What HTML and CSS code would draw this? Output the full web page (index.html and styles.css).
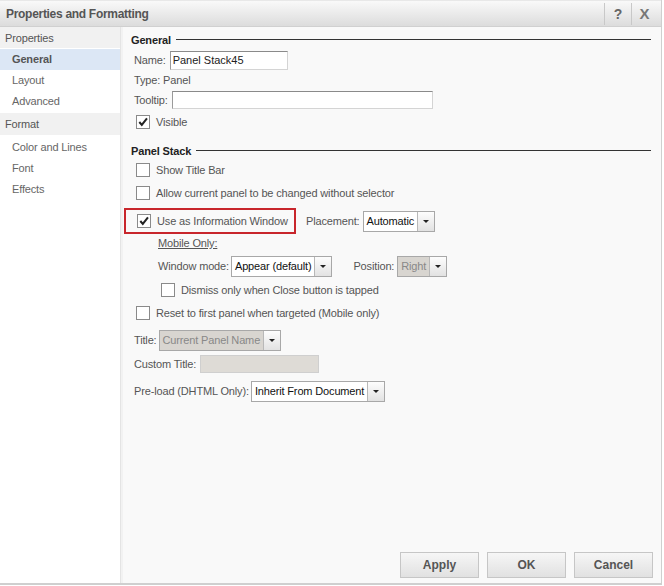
FILE: index.html
```html
<!DOCTYPE html>
<html lang="en">
<head>
    <meta charset="UTF-8">
    <title>Properties and Formatting</title>
    <link rel="stylesheet" href="styles.css">
</head>
<body>
    <div class="dialog">
        <div class="titlebar">
            <div class="title">Properties and Formatting</div>
            <div class="title-btn">?</div>
            <div class="title-btn close">X</div>
        </div>

        <div class="main">
            <div class="sidebar">
                <div class="side-head">Properties</div>
                <div class="side-item active">General</div>
                <div class="side-item">Layout</div>
                <div class="side-item">Advanced</div>
                <div class="side-head format-head">Format</div>
                <div class="side-item">Color and Lines</div>
                <div class="side-item">Font</div>
                <div class="side-item">Effects</div>
            </div>

            <div class="content">
                <div class="section-title">General</div>
                <div class="row name-row">
                    <span class="label">Name:</span>
                    <input type="text" class="field name-field" value="Panel Stack45">
                </div>
                <div class="row tight">
                    <span class="label">Type: Panel</span>
                </div>
                <div class="row tight">
                    <span class="label">Tooltip:</span>
                    <input type="text" class="field tooltip-field">
                </div>
                <div class="row check-row gap2">
                    <span class="checkbox checked"><svg viewBox="0 0 13 13"><path d="M2.5 6.5 L5.2 9.6 L10.8 2.6" /></svg></span>
                    <span class="label">Visible</span>
                </div>

                <div class="section-title panel-title">Panel Stack</div>
                <div class="row check-row gap2">
                    <span class="checkbox"></span>
                    <span class="label">Show Title Bar</span>
                </div>
                <div class="row check-row">
                    <span class="checkbox"></span>
                    <span class="label">Allow current panel to be changed without selector</span>
                </div>
                <div class="row info-row">
                    <div class="highlight">
                        <span class="checkbox checked"><svg viewBox="0 0 13 13"><path d="M2.5 6.5 L5.2 9.6 L10.8 2.6" /></svg></span>
                        <span class="label">Use as Information Window</span>
                    </div>
                    <span class="label placement-label">Placement:</span>
                    <div class="select">
                        <span class="select-value">Automatic</span>
                        <span class="select-arrow"></span>
                    </div>
                </div>
                <div class="row mobile-row">
                    <span class="label underline">Mobile Only:</span>
                </div>
                <div class="row indent">
                    <span class="label">Window mode:</span>
                    <div class="select">
                        <span class="select-value">Appear (default)</span>
                        <span class="select-arrow"></span>
                    </div>
                    <span class="label position-label">Position:</span>
                    <div class="select disabled">
                        <span class="select-value">Right</span>
                        <span class="select-arrow"></span>
                    </div>
                </div>
                <div class="row check-row dismiss-row">
                    <span class="checkbox"></span>
                    <span class="label">Dismiss only when Close button is tapped</span>
                </div>
                <div class="row check-row">
                    <span class="checkbox"></span>
                    <span class="label">Reset to first panel when targeted (Mobile only)</span>
                </div>
                <div class="row title-row">
                    <span class="label">Title:</span>
                    <div class="select disabled">
                        <span class="select-value">Current Panel Name</span>
                        <span class="select-arrow"></span>
                    </div>
                </div>
                <div class="row custom-row">
                    <span class="label">Custom Title:</span>
                    <input type="text" class="field custom-field" disabled>
                </div>
                <div class="row preload-row">
                    <span class="label">Pre-load (DHTML Only):</span>
                    <div class="select">
                        <span class="select-value">Inherit From Document</span>
                        <span class="select-arrow"></span>
                    </div>
                </div>

                <div class="footer">
                    <button class="btn">Apply</button>
                    <button class="btn">OK</button>
                    <button class="btn">Cancel</button>
                </div>
            </div>
        </div>
    </div>
</body>
</html>
```

FILE: styles.css
```css
* {
    margin: 0;
    padding: 0;
    box-sizing: border-box;
}

body {
    background: #ffffff;
    font-family: 'Liberation Sans', Arial, sans-serif;
    font-size: 11px;
    letter-spacing: -0.15px;
    color: #555;
}

.dialog {
    width: 662px;
    height: 585px;
    border-right: 1px solid #cfcfcf;
    border-bottom: 2px solid #cfcfcf;
    display: flex;
    flex-direction: column;
}

/* title bar */
.titlebar {
    height: 27px;
    display: flex;
    align-items: center;
    background: linear-gradient(#f9f9f9, #dcdcdc);
    border-top: 1px solid #e8e8e8;
    border-bottom: 1px solid #d0d0d0;
}

.title {
    flex: 1;
    padding-left: 6px;
    font-size: 12px;
    letter-spacing: -0.3px;
    font-weight: bold;
    color: #555;
}

.title-btn {
    width: 27px;
    height: 22px;
    line-height: 22px;
    text-align: center;
    font-size: 14px;
    font-weight: bold;
    color: #666;
    border-left: 1px solid #c8c8c8;
}

.title-btn.close {
    width: 26px;
    margin-right: 4px;
    font-size: 15px;
    color: #777;
}

.main {
    flex: 1;
    display: flex;
    min-height: 0;
}

/* left navigation */
.sidebar {
    width: 121px;
    background: #fff;
    border-right: 1px solid #e4e4e4;
}

.side-head {
    height: 21px;
    line-height: 22px;
    padding-left: 5px;
    background: #f1f1f1;
    color: #555;
    margin-bottom: 1px;
}

.format-head {
    height: 22px;
    margin-top: 1px;
    margin-bottom: 2px;
}

.side-item {
    height: 21px;
    line-height: 21px;
    padding-left: 12px;
    color: #666;
}

.side-item.active {
    background: #dce7f5;
    font-weight: bold;
    color: #555;
}

/* content */
.content {
    flex: 1;
    background: #f9f9f9;
    border-left: 2px solid #f2f2f2;
    padding: 6px 10px 5px 8px;
    display: flex;
    flex-direction: column;
}

.section-title {
    display: flex;
    align-items: center;
    height: 14px;
    font-weight: bold;
    color: #222;
}

.section-title::after {
    content: "";
    flex: 1;
    height: 1px;
    background: #333;
    margin-left: 5px;
    margin-top: -2px;
}

.panel-title {
    margin-top: 12px;
}

.row {
    display: flex;
    align-items: center;
    height: 20px;
    margin-top: 3px;
    padding-left: 3px;
}

.tight {
    margin-top: 0;
}

.gap2 {
    margin-top: 2px;
}

.check-row {
    padding-left: 5px;
}

.label {
    white-space: nowrap;
    color: #555;
}

.field {
    height: 19px;
    border: 1px solid #d4d4d4;
    border-top-color: #8a8a8a;
    border-left-color: #9a9a9a;
    background: #fff;
    font-family: inherit;
    font-size: 11px;
    color: #222;
    padding: 0 2px;
    margin-left: 4px;
}

.name-field {
    width: 118px;
}

.tooltip-field {
    width: 261px;
    height: 18px;
}

.custom-field {
    width: 119px;
    height: 18px;
    background: #dedbd6;
    border-color: #cfcfcf;
}

.checkbox {
    width: 14px;
    height: 14px;
    border: 1px solid #8a8a8a;
    background: #fff;
    margin-right: 6px;
    display: inline-flex;
}

.checkbox svg {
    width: 12px;
    height: 12px;
}

.checkbox path {
    fill: none;
    stroke: #222;
    stroke-width: 2.2;
}

.info-row {
    height: 26px;
    margin-top: 5px;
    padding-left: 0;
    margin-left: -7px;
}

.highlight {
    display: flex;
    align-items: center;
    height: 26px;
    width: 172px;
    border: 2px solid #c8262c;
    padding-left: 11px;
}

.placement-label {
    margin-left: 10px;
    margin-right: 1px;
}

.mobile-row {
    height: 18px;
    margin-top: 0;
    padding-left: 27px;
}

.underline {
    text-decoration: underline;
}

.indent {
    padding-left: 27px;
    margin-top: 4px;
}

.position-label {
    margin-left: 21px;
    margin-right: 1px;
}

.dismiss-row {
    padding-left: 30px;
    margin-top: 4px;
}

.title-row {
    margin-top: 7px;
}

.custom-row {
    height: 18px;
    margin-top: 5px;
}

.preload-row {
    height: 22px;
    margin-top: 7px;
}

/* dropdowns */
.select {
    display: flex;
    height: 21px;
    margin-left: 2px;
    border: 1px solid #a8a8a8;
    background: #fff;
}

.select-value {
    padding: 0 3px;
    line-height: 19px;
    color: #111;
    font-size: 11px;
    white-space: nowrap;
    border-right: 1px solid #b8b8b8;
}

.select-arrow {
    width: 16px;
    background: linear-gradient(#fdfdfd, #e2e2e2);
    position: relative;
}

.select-arrow::after {
    content: "";
    position: absolute;
    left: 5px;
    top: 8px;
    border-left: 3px solid transparent;
    border-right: 3px solid transparent;
    border-top: 3px solid #222;
}

.select.disabled .select-value {
    background: #d8d5d0;
    color: #888;
}

/* buttons */
.footer {
    margin-top: auto;
    margin-right: -2px;
    display: flex;
    justify-content: flex-end;
    gap: 8px;
}

.btn {
    width: 79px;
    height: 26px;
    border: 1px solid #c6c6c6;
    background: linear-gradient(#f6f6f6, #e1e1e1);
    font-family: inherit;
    font-size: 12px;
    font-weight: bold;
    color: #555;
}
```
